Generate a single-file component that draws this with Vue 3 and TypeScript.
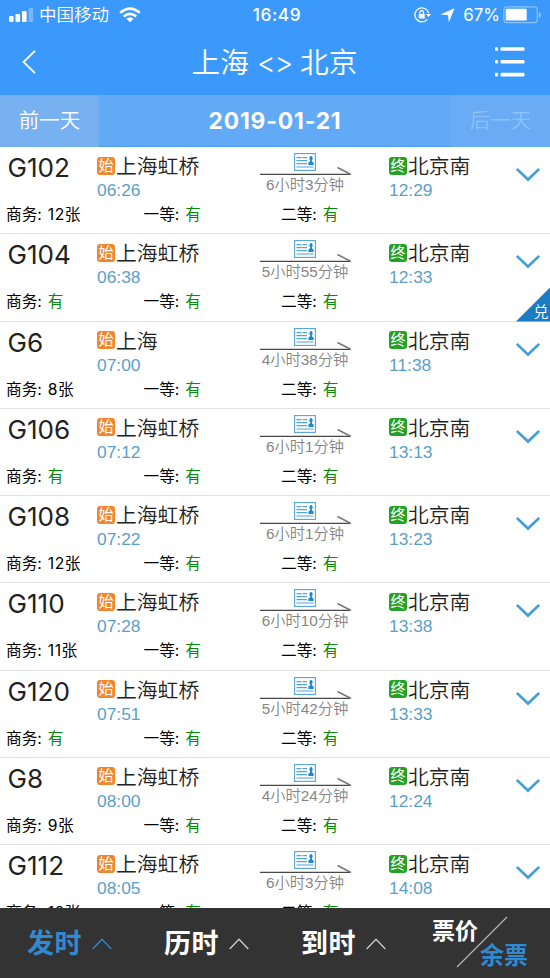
<script setup lang="ts">
interface Train {
  code: string
  from: string
  depart: string
  duration: string
  arrive: string
  business: string
  exchange?: boolean
}

const trains: Train[] = [
  { code: 'G102', from: '上海虹桥', depart: '06:26', duration: '6小时3分钟', arrive: '12:29', business: '12张' },
  { code: 'G104', from: '上海虹桥', depart: '06:38', duration: '5小时55分钟', arrive: '12:33', business: '有', exchange: true },
  { code: 'G6', from: '上海', depart: '07:00', duration: '4小时38分钟', arrive: '11:38', business: '8张' },
  { code: 'G106', from: '上海虹桥', depart: '07:12', duration: '6小时1分钟', arrive: '13:13', business: '有' },
  { code: 'G108', from: '上海虹桥', depart: '07:22', duration: '6小时1分钟', arrive: '13:23', business: '12张' },
  { code: 'G110', from: '上海虹桥', depart: '07:28', duration: '6小时10分钟', arrive: '13:38', business: '11张' },
  { code: 'G120', from: '上海虹桥', depart: '07:51', duration: '5小时42分钟', arrive: '13:33', business: '有' },
  { code: 'G8', from: '上海虹桥', depart: '08:00', duration: '4小时24分钟', arrive: '12:24', business: '9张' },
  { code: 'G112', from: '上海虹桥', depart: '08:05', duration: '6小时3分钟', arrive: '14:08', business: '12张' },
]

const sorts = [
  { label: '发时', active: true },
  { label: '历时', active: false },
  { label: '到时', active: false },
]
</script>

<template>
  <div class="screen">
    <header class="top">
      <div class="status">
        <div class="status-left">
          <svg class="signal" width="25" height="16" viewBox="0 0 25 16" fill="#fff">
            <rect x="0" y="9" width="4.6" height="6" rx="1.2" />
            <rect x="6.5" y="7" width="4.6" height="8" rx="1.2" />
            <rect x="13" y="4" width="4.6" height="11" rx="1.2" />
            <rect x="19.5" y="1" width="4.6" height="14" rx="1.2" opacity=".3" />
          </svg>
          <span class="carrier">中国移动</span>
          <svg class="wifi" width="22" height="16" viewBox="0 0 22 16" fill="none" stroke="#fff" stroke-width="2.7">
            <path d="M1.2 5.8Q11 -2.6 20.8 5.8" />
            <path d="M4.7 9.6Q11 4.2 17.3 9.6" />
            <path d="M7.4 11.8Q11 8.7 14.6 11.8L11 15.2Z" fill="#fff" stroke="none" />
          </svg>
        </div>
        <span class="clock">16:49</span>
        <div class="status-right">
          <svg width="18" height="16" viewBox="0 0 18 16" fill="none" stroke="#fff" stroke-width="1.3">
            <path d="M14.7 6.2A7 7 0 1 0 13.2 12.4" />
            <path d="M12 7h5l-2.5 3z" fill="#fff" stroke="none" />
            <rect x="4.7" y="7" width="6" height="4.5" rx=".6" fill="#fff" stroke="none" />
            <path d="M5.9 7V5.5a1.8 1.8 0 0 1 3.6 0V7" />
          </svg>
          <svg class="location" width="15" height="15" viewBox="0 0 15 15" fill="#fff"><path d="M14.6.3 8.8 14.3 8.1 7.2.4 6.6Z" /></svg>
          <span class="percent">67%</span>
          <svg width="39" height="18" viewBox="0 0 39 18">
            <rect x=".8" y=".8" width="33.5" height="15.8" rx="3" fill="none" stroke="#fff" stroke-opacity=".4" stroke-width="1.3" />
            <rect x="2.7" y="2.8" width="21" height="11.8" rx="1" fill="#fff" />
            <path d="M36 6v6q2-1 2-3t-2-3" fill="#fff" opacity=".45" />
          </svg>
        </div>
      </div>
      <nav class="nav">
        <svg width="14" height="24" viewBox="0 0 14 24" fill="none" stroke="#fff" stroke-width="1.8"><path d="M13 .8 1.5 12 13 23.2" /></svg>
        <h1>上海 <span class="swap">&lt;&gt;</span> 北京</h1>
        <svg class="menu" width="30" height="32" viewBox="0 0 30 32" fill="#fff">
          <g v-for="y in [1.2, 14, 26.8]" :key="y">
            <rect x="0" :y="y" width="3" height="3.6" rx="1" />
            <rect x="5.5" :y="y" width="24" height="3.6" rx="1" />
          </g>
        </svg>
      </nav>
    </header>

    <div class="dates">
      <div class="previous">前一天</div>
      <div class="date">2019-01-21</div>
      <div class="next">后一天</div>
    </div>

    <main class="list">
      <article v-for="train in trains" :key="train.code" class="train">
        <div class="trip">
          <div class="code">{{ train.code }}</div>
          <div class="stop">
            <div class="station"><i class="tag start">始</i>{{ train.from }}</div>
            <div class="time">{{ train.depart }}</div>
          </div>
          <div class="journey">
            <svg class="card" width="22" height="18" viewBox="0 0 22 18">
              <rect x=".6" y=".6" width="20.8" height="16.8" fill="#fff" stroke="#53a5d8" stroke-width="1.1" />
              <path d="M2.5 4.7H7.5M8.5 4.7H13M2.5 7.7H13M2.5 10.7H13M2.5 14H19.5" stroke="#53a5d8" stroke-width="1.2" />
              <ellipse cx="17" cy="5.2" rx="1.6" ry="2.2" fill="#2189c9" />
              <path d="M16.2 7h1.6l.2 1.6q1.6.2 1.6 1.4v2h-5.2v-2q0-1.2 1.6-1.4Z" fill="#2189c9" />
            </svg>
            <svg class="arrow" width="92" height="10" viewBox="0 0 92 10" fill="none">
              <path d="M0 8.4H90" stroke="#484848" stroke-width="1.2" />
              <path d="M77.5 1.5 91 8.5" stroke="#777" stroke-width="1.5" />
            </svg>
            <div class="duration">{{ train.duration }}</div>
          </div>
          <div class="stop">
            <div class="station"><i class="tag end">终</i>北京南</div>
            <div class="time">{{ train.arrive }}</div>
          </div>
          <svg class="expand" width="24" height="14" viewBox="0 0 24 14" fill="none" stroke="#46a0d8" stroke-width="2.7"><path d="M.8 1 12 11.6 23.2 1" /></svg>
        </div>
        <div class="seats">
          <div>商务: <span class="count" :class="{ available: train.business === '有' }">{{ train.business }}</span></div>
          <div>一等: <span class="count available">有</span></div>
          <div>二等: <span class="count available">有</span></div>
        </div>
        <div v-if="train.exchange" class="exchange"><span>兑</span></div>
      </article>
    </main>

    <footer class="sorting">
      <div v-for="sort in sorts" :key="sort.label" class="sort" :class="{ active: sort.active }">
        <span>{{ sort.label }}</span>
        <svg width="20" height="12" viewBox="0 0 20 12" fill="none" stroke="currentColor" stroke-width="1.3"><path d="M.7 11 10 1.2 19.3 11" /></svg>
      </div>
      <div class="toggle">
        <span class="price">票价</span>
        <svg width="52" height="52" viewBox="0 0 52 52"><path d="M1 51 51 1" stroke="#bbb" stroke-width="1.1" /></svg>
        <span class="remaining">余票</span>
      </div>
    </footer>
  </div>
</template>

<style>
body { margin: 0; }
</style>

<style scoped>
.screen {
  width: 550px;
  height: 978px;
  display: flex;
  flex-direction: column;
  overflow: hidden;
  background: #fff;
  font-family: Inter, "Noto Sans CJK SC", sans-serif;
  color: #222;
}
.screen * { box-sizing: border-box; }
svg { display: block; flex: none; }
.top { height: 95px; flex: none; background: #3b99fc; color: #fff; }
.status { height: 30px; display: grid; grid-template-columns: 1fr auto 1fr; align-items: center; padding: 0 9px; }
.status-left, .status-right { display: flex; align-items: center; }
.status-right { justify-content: flex-end; margin-right: -1px; }
.carrier { font-size: 17.5px; line-height: 30px; margin: 0 10px 0 5px; font-weight: 350; }
.clock { font-size: 17.3px; font-weight: 500; line-height: 30px; letter-spacing: .6px; margin-left: 4px; }
.location { margin: 0 8px 0 8px; }
.percent { font-size: 17px; line-height: 30px; margin-right: 3px; }
.nav { height: 65px; display: grid; grid-template-columns: 30px 1fr 30px; align-items: center; padding: 0 25px 2px 22px; }
.nav h1 { margin: 2px 0 0; padding-left: 2px; text-align: center; font-size: 28.7px; line-height: 60px; font-weight: 350; white-space: nowrap; }
.swap { letter-spacing: -1.3px; }
.dates { height: 52px; flex: none; display: grid; grid-template-columns: 99px 1fr 99px; background: #62aaf6; border-bottom: 1px solid #509fee; color: #fff; text-align: center; line-height: 51px; }
.previous, .next { font-size: 20.5px; font-weight: 350; }
.previous { background: #78b1f1; }
.next { background: #69abf4; color: #8fc1f8; }
.date { font-size: 22.8px; font-weight: 700; letter-spacing: .85px; line-height: 52px; }
.list { flex: 1; min-height: 0; overflow: hidden; }
.train { position: relative; height: 87.25px; border-bottom: 1px solid #e2e2e2; }
.trip { height: 57px; display: grid; grid-template-columns: 89px 163px 129px 127px 24px; }
.code { padding: 3px 0 0 7.5px; font-size: 26.1px; line-height: 35px; font-weight: 370; }
.stop { padding: 4px 0 0 8px; }
.station { display: flex; align-items: center; font-size: 20.8px; line-height: 31px; height: 31px; font-weight: 350; white-space: nowrap; }
.tag { width: 18px; height: 18px; margin: 0 1px 2px 0; border-radius: 3px; color: #fff; font-size: 15px; line-height: 17px; text-align: center; font-style: normal; font-weight: 400; }
.start { background: #ee8730; }
.end { background: #25a128; }
.time { margin-top: -2px; font-family: "Liberation Sans", sans-serif; font-size: 17.4px; line-height: 20px; color: #5a9fca; }
.journey { padding: 6px 0 0 7.5px; }
.card { margin-left: 34.5px; }
.arrow { margin-top: -5px; }
.duration { width: 91px; text-align: center; font-family: "Liberation Sans", "Noto Sans CJK SC", sans-serif; font-size: 15.3px; line-height: 18px; font-weight: 350; color: #858585; white-space: nowrap; }
.expand { margin: 21px 0 0 8px; }
.seats { display: grid; grid-template-columns: 137.5px 137.5px 1fr; padding-left: 6px; font-size: 15.7px; line-height: 22px; color: #000; }
.count { margin-left: 1.5px; letter-spacing: .5px; }
.available { color: #0a8a0a; }
.exchange { position: absolute; right: 0; bottom: -1px; width: 34px; height: 34px; background: #1d7bc3; clip-path: polygon(100% 0, 100% 100%, 0 100%); color: #fff; }
.exchange span { position: absolute; right: 1.5px; bottom: 0; font-size: 15px; line-height: 20px; font-weight: 350; }
.sorting { height: 70px; flex: none; display: grid; grid-template-columns: 137px 137px 137px 1fr; background: #333; color: #fff; }
.sort { display: flex; align-items: center; gap: 10px; padding-left: 27px; font-size: 27px; letter-spacing: .4px; line-height: 71px; font-weight: 700; }
.sort svg { color: #ccc; }
.sort.active, .sort.active svg { color: #3189cf; }
.toggle { position: relative; font-size: 23px; line-height: 30px; font-weight: 700; }
.toggle svg { position: absolute; left: 45px; top: 8px; }
.price { position: absolute; left: 21px; top: 8px; }
.remaining { position: absolute; left: 69px; top: 33px; font-size: 24px; color: #3189cf; }
</style>
